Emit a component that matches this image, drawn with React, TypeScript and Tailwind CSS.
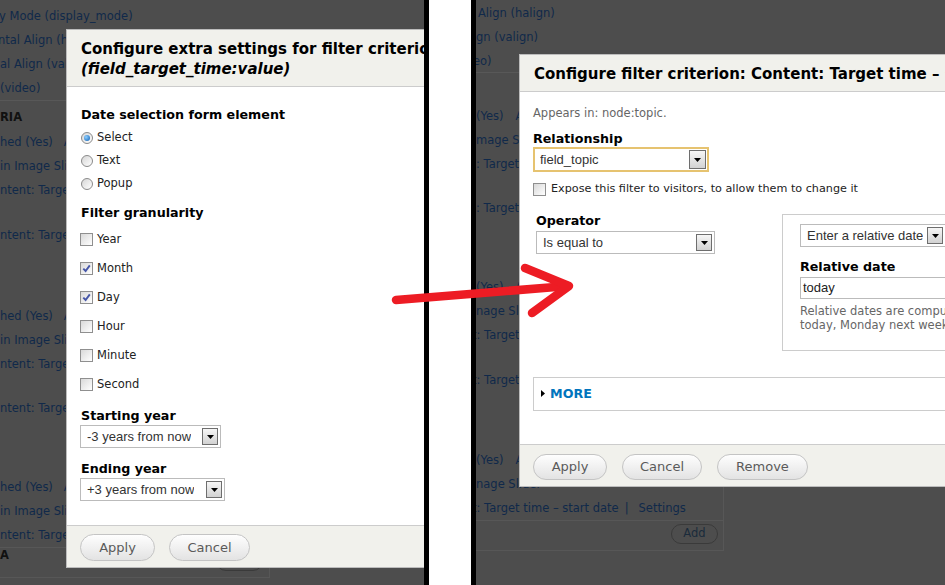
import React from "react";

const FORM_FONT = "font-['Liberation_Sans',Arial,sans-serif]";

function Arrow({ big }: { big?: boolean }) {
  return (
    <div
      className={`flex items-center justify-center border border-[#6e6e6e] bg-linear-to-b from-[#f6f6f6] to-[#d2d2d2] ${
        big ? "w-[17px] h-[19px]" : "w-[16px] h-[17px]"
      }`}
    >
      <svg width="7" height="4" viewBox="0 0 7 4">
        <path d="M0 0H7L3.5 4Z" fill="#000" />
      </svg>
    </div>
  );
}

function Select({ text, className = "", focus }: { text: string; className?: string; focus?: boolean }) {
  return (
    <div
      className={`flex items-center justify-between bg-white text-[13px] text-[#333] ${FORM_FONT} ${
        focus ? "h-[25px] border-2 border-[#e6c370] pl-[5px] pr-[1px]" : "h-[23px] border border-[#bbbbbb] pl-[6px] pr-[2px]"
      } ${className}`}
    >
      <span className="whitespace-nowrap overflow-hidden">{text}</span>
      <Arrow big={focus} />
    </div>
  );
}

function Label({ children, className = "" }: { children: React.ReactNode; className?: string }) {
  return <div className={`text-[12.7px] leading-[16px] font-bold text-black whitespace-nowrap ${className}`}>{children}</div>;
}

function Checkbox({ checked }: { checked?: boolean }) {
  return (
    <div className="w-[13px] h-[13px] shrink-0 border border-[#8f8f8f] bg-linear-to-br from-[#d9d9d9] to-[#ffffff] flex items-center justify-center">
      {checked && (
        <svg width="9" height="9" viewBox="0 0 9 9">
          <path d="M1.3 4.6L3.6 7L7.8 1.4" stroke="#4656a8" strokeWidth="1.9" fill="none" />
        </svg>
      )}
    </div>
  );
}

function Radio({ checked }: { checked?: boolean }) {
  return (
    <div className="w-[12px] h-[12px] shrink-0 rounded-full border border-[#8a8a8a] bg-linear-to-br from-[#d6d6d6] to-[#ffffff] flex items-center justify-center">
      {checked && <div className="w-[6px] h-[6px] rounded-full bg-[radial-gradient(circle_at_35%_35%,#8fd0ff,#0a5cb3)]" />}
    </div>
  );
}

function Btn({ children, className = "" }: { children: React.ReactNode; className?: string }) {
  return (
    <button
      type="button"
      className={`flex items-center justify-center rounded-full border border-[#c4c4c4] bg-linear-to-b from-[#fefefe] to-[#e3e3e3] text-[13px] text-[#5a5a5a] ${className}`}
    >
      {children}
    </button>
  );
}

function BgRow({ children, className = "" }: { children: React.ReactNode; className?: string }) {
  return <div className={`h-[24px] leading-[24px] whitespace-nowrap text-[11.5px] ${className}`}>{children}</div>;
}

function LeftPanel() {
  return (
    <div className="relative w-[424px] h-[585px] shrink-0 overflow-hidden bg-[#4d4d4d]">
      {/* page behind the overlay */}
      <div className="w-[270px] flex flex-col pt-[4px] text-[#10294a]">
        <BgRow className="-ml-[1px]">y Mode (display_mode)</BgRow>
        <BgRow className="-ml-[2px]">ntal Align (halign)</BgRow>
        <BgRow>al Align (valign)</BgRow>
        <BgRow>(video)</BgRow>
        <div className="h-px w-[424px] bg-[#585858]" />
        <BgRow className="mt-[4px] font-bold text-[#111]">RIA</BgRow>
        <BgRow className="mt-[1px]">
          hed (Yes)<span className="ml-[11px]">Asc</span>
        </BgRow>
        <BgRow>in Image Slider</BgRow>
        <BgRow>ntent: Target time – start date</BgRow>
        <BgRow className="mt-[21px]">ntent: Target time – end date</BgRow>
        <BgRow className="mt-[57px]">
          hed (Yes)<span className="ml-[11px]">Asc</span>
        </BgRow>
        <BgRow>in Image Slider</BgRow>
        <BgRow>ntent: Target time – start date</BgRow>
        <BgRow className="mt-[20px]">ntent: Target time – end date</BgRow>
        <div className="mt-[55px] flex flex-col border-r border-b border-[#575757]">
          <BgRow>
            hed (Yes)<span className="ml-[11px]">Asc</span>
          </BgRow>
          <BgRow>in Image Slider</BgRow>
          <BgRow>ntent: Target time – start date</BgRow>
          <div className="h-[30px] border-t border-[#575757] flex items-start">
            <span className="text-[11.5px] leading-[14px] font-bold text-[#111]">A</span>
            <div className="ml-auto mr-[6px] mt-[3px] w-[47px] h-[20px] rounded-full border border-[#3a3a3a] flex items-center justify-center text-[11.5px] text-[#1a2b3b]">
              Add
            </div>
          </div>
        </div>
      </div>

      {/* dialog */}
      <div className="absolute left-[66px] top-[29px] w-[400px] h-[539px] flex flex-col bg-white border border-[#bcbcbc]">
        <div className="bg-[#f1f1ec] border-b border-[#cccccc] pl-[14px] pt-[9px] pb-[7px] text-black text-[15px] leading-[20px] font-bold whitespace-nowrap">
          <div>Configure extra settings for filter criterion</div>
          <div className="italic">(field_target_time:value)</div>
        </div>
        <div className="flex-1 flex flex-col items-start pl-[14px] pt-[20px]">
          <Label>Date selection form element</Label>
          <div className="mt-[3px] flex flex-col text-[11.5px] text-[#222]">
            <div className="h-[23px] flex items-center gap-[4px]">
              <Radio checked />
              <span>Select</span>
            </div>
            <div className="h-[23px] flex items-center gap-[4px]">
              <Radio />
              <span>Text</span>
            </div>
            <div className="h-[23px] flex items-center gap-[4px]">
              <Radio />
              <span>Popup</span>
            </div>
          </div>
          <Label className="mt-[10px]">Filter granularity</Label>
          <div className="mt-[4px] flex flex-col text-[11.5px] text-[#222] -ml-[1px]">
            {[
              ["Year", false],
              ["Month", true],
              ["Day", true],
              ["Hour", false],
              ["Minute", false],
              ["Second", false],
            ].map(([l, c]) => (
              <div key={l as string} className="h-[29px] flex items-center gap-[4px]">
                <Checkbox checked={c as boolean} />
                <span>{l as string}</span>
              </div>
            ))}
          </div>
          <Label className="mt-[9px]">Starting year</Label>
          <Select className="mt-[1px] -ml-[1px] w-[141px]" text="-3 years from now" />
          <Label className="mt-[13px]">Ending year</Label>
          <Select className="mt-[1px] -ml-[1px] w-[145px]" text="+3 years from now" />
        </div>
        <div className="h-[42px] shrink-0 border-t border-[#cccccc] bg-[#f1f1ec] pl-[13px] pt-[8px] flex items-start gap-[14px]">
          <Btn className="w-[75px] h-[27px]">Apply</Btn>
          <Btn className="w-[81px] h-[27px]">Cancel</Btn>
        </div>
      </div>
    </div>
  );
}

function RightPanel() {
  return (
    <div className="relative flex-1 h-[585px] overflow-hidden bg-[#4d4d4d]">
      {/* page behind the overlay */}
      <div className="w-[248px] flex flex-col pt-[1px] text-[#10294a]">
        <BgRow className="ml-[2px]">Align (halign)</BgRow>
        <BgRow>gn (valign)</BgRow>
        <BgRow className="-ml-[3px]">eo)</BgRow>
        <div className="-mt-px h-px w-[469px] bg-[#585858]" />
        <BgRow className="mt-[31px]">
          (Yes)<span className="ml-[12px]">Asc</span>
        </BgRow>
        <BgRow>mage Slider</BgRow>
        <BgRow>: Target time – start date</BgRow>
        <BgRow className="mt-[20px]">: Target time – end date</BgRow>
        <BgRow className="mt-[55px]">
          (Yes)<span className="ml-[12px]">Asc</span>
        </BgRow>
        <BgRow>nage Slider</BgRow>
        <BgRow className="-ml-[4px]">t: Target time – start date</BgRow>
        <BgRow className="mt-[21px] -ml-[4px]">t: Target time – end date</BgRow>
        <div className="mt-[56px] flex flex-col border-r border-b border-[#575757]">
          <BgRow>
            (Yes)<span className="ml-[12px]">Asc</span>
          </BgRow>
          <BgRow>nage Slider</BgRow>
          <BgRow className="-ml-[4px]">
            t: Target time – start date<span className="ml-[6px]">|</span>
            <span className="ml-[10px]">Settings</span>
          </BgRow>
          <div className="h-[30px] border-t border-[#575757] flex items-start justify-end pr-[5px]">
            <div className="mt-[3px] w-[47px] h-[20px] rounded-full border border-[#3a3a3a] flex items-center justify-center text-[11.5px] text-[#1a2b3b]">
              Add
            </div>
          </div>
        </div>
      </div>

      {/* dialog */}
      <div className="absolute left-[43px] top-[54px] w-[480px] h-[433px] flex flex-col bg-white border border-[#bcbcbc]">
        <div className="bg-[#f1f1ec] border-b border-[#cccccc] pl-[14px] pt-[9px] pb-[7px] text-black text-[15px] leading-[20px] font-bold whitespace-nowrap">
          Configure filter criterion: Content: Target time – start date
        </div>
        <div className="flex-1 flex flex-col items-start pl-[13px] pt-[13px]">
          <div className="text-[11.5px] leading-[16px] text-[#666]">Appears in: node:topic.</div>
          <Label className="mt-[10px]">Relationship</Label>
          <Select focus className="w-[176px]" text="field_topic" />
          <div className="mt-[7px] h-[20px] flex items-center gap-[5px] text-[11.2px] text-[#222] whitespace-nowrap">
            <Checkbox />
            <span>Expose this filter to visitors, to allow them to change it</span>
          </div>
          <div className="mt-[14px] flex items-start">
            <div className="w-[249px] pl-[3px] flex flex-col items-start">
              <Label>Operator</Label>
              <Select className="mt-[2px] w-[179px]" text="Is equal to" />
            </div>
            <div className="mt-[1px] w-[320px] border border-[#cccccc] pl-[17px] pt-[9px] pb-[18px] flex flex-col items-start">
              <Select className="w-[146px]" text="Enter a relative date" />
              <Label className="mt-[12px]">Relative date</Label>
              <div
                className={`mt-[1.5px] h-[22px] w-[240px] border border-[#bbbbbb] bg-white pl-[2px] flex items-center text-[13px] text-[#222] ${FORM_FONT}`}
              >
                today
              </div>
              <div className="mt-[5px] text-[11.5px] leading-[14px] text-[#666] whitespace-nowrap">
                Relative dates are computed when the view is displayed. Examples: now, now+1 day,
                <br />
                today, Monday next week.
              </div>
            </div>
          </div>
          <div className="mt-[26px] w-[440px] h-[34px] border border-[#cccccc] flex items-center pl-[7px]">
            <svg width="4" height="7" viewBox="0 0 4 7">
              <path d="M0 0L4 3.5L0 7Z" fill="#000" />
            </svg>
            <span className="ml-[5px] text-[12.7px] font-bold text-[#0074bd]">MORE</span>
          </div>
        </div>
        <div className="h-[42px] shrink-0 border-t border-[#cccccc] bg-[#f1f1ec] pl-[13px] pt-[9px] flex items-start gap-[15px]">
          <Btn className="w-[74px] h-[26px]">Apply</Btn>
          <Btn className="w-[80px] h-[26px]">Cancel</Btn>
          <Btn className="w-[91px] h-[26px]">Remove</Btn>
        </div>
      </div>
    </div>
  );
}

export default function App() {
  return (
    <div className="relative w-[945px] h-[585px] flex overflow-hidden bg-white font-['DejaVu_Sans',Verdana,sans-serif]">
      <LeftPanel />
      <div className="w-[5px] shrink-0 bg-black" />
      <div className="w-[42px] shrink-0 bg-white" />
      <div className="w-[5px] shrink-0 bg-black" />
      <RightPanel />
      <svg className="absolute left-0 top-0 pointer-events-none" width="945" height="585" viewBox="0 0 945 585">
        <g stroke="#ed1c24" strokeWidth="8.5" strokeLinecap="round" strokeLinejoin="round" fill="none">
          <path d="M396 300L568 286" />
          <path d="M525 268L569 286L532 313" />
        </g>
      </svg>
    </div>
  );
}
